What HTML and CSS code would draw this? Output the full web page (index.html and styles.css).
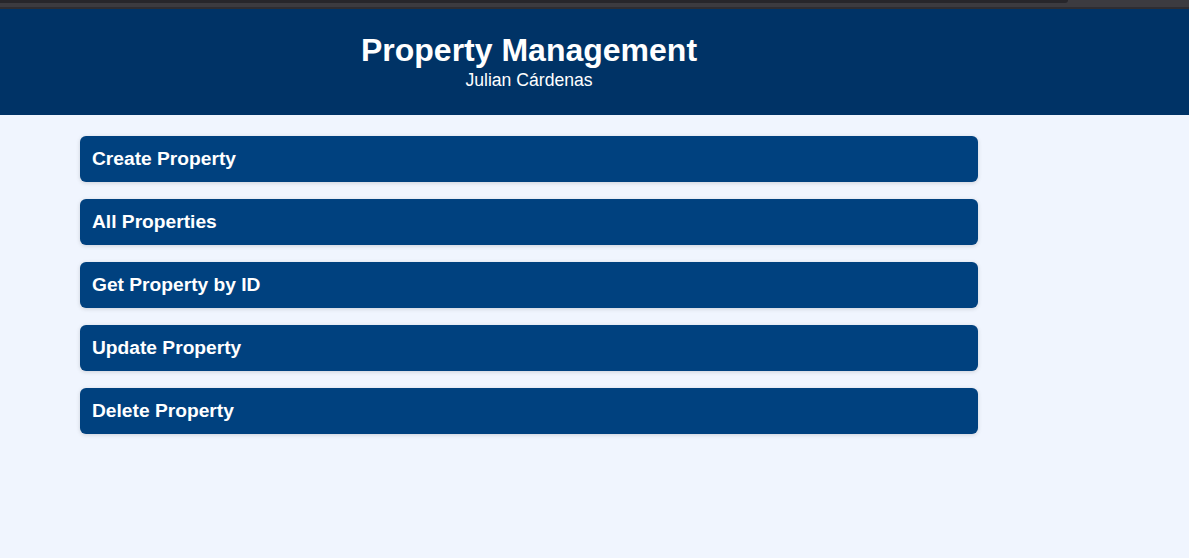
FILE: index.html
```html
<!DOCTYPE html>
<html lang="en">
<head>
<meta charset="utf-8">
<title>Property Management</title>
<link rel="stylesheet" href="styles.css">
</head>
<body>
<div class="chrome">
  <div class="chrome-tabs"><div class="tab-dark"></div><div class="tab-light"></div></div>
  <div class="chrome-bar"></div>
  <div class="chrome-line"></div>
</div>
<header class="header">
  <div class="header-inner">
    <h1 class="title">Property Management</h1>
    <p class="subtitle">Julian Cárdenas</p>
  </div>
</header>
<main class="content">
  <button class="action">Create Property</button>
  <button class="action">All Properties</button>
  <button class="action">Get Property by ID</button>
  <button class="action">Update Property</button>
  <button class="action">Delete Property</button>
</main>
</body>
</html>
```
FILE: styles.css
```css
* { box-sizing: border-box; }
html, body { margin: 0; padding: 0; }
body {
  background: #f0f5fe;
  font-family: "Liberation Sans", Arial, sans-serif;
  height: 558px;
  overflow: hidden;
}
.chrome { display: flex; flex-direction: column; }
.chrome-tabs { display: flex; height: 3px; background: #3c3b40; }
.tab-dark { width: 1068px; background: #27262b; border-bottom-right-radius: 3px; }
.tab-light { flex: 1; }
.chrome-bar { height: 4px; background: #3c3b40; }
.chrome-line { height: 2px; background: #2e2d32; }
.header {
  background: #003366;
  color: #ffffff;
  padding: 23px 0 25px;
}
.header-inner {
  width: 898px;
  margin-left: 80px;
  text-align: center;
}
.title {
  margin: 0;
  font-size: 32px;
  font-weight: bold;
  line-height: 37px;
}
.subtitle {
  margin: 1px 0 0;
  font-size: 17.6px;
  line-height: 20px;
}
.content {
  display: flex;
  flex-direction: column;
  gap: 17px;
  width: 898px;
  margin: 21px 0 0 80px;
}
.action {
  height: 46px;
  border: none;
  border-radius: 6px;
  background: #00417f;
  color: #ffffff;
  font-family: inherit;
  font-size: 19.2px;
  font-weight: bold;
  text-align: left;
  padding: 0 12px;
  box-shadow: 0 1px 4px rgba(0, 0, 0, 0.15);
  cursor: pointer;
}
```
